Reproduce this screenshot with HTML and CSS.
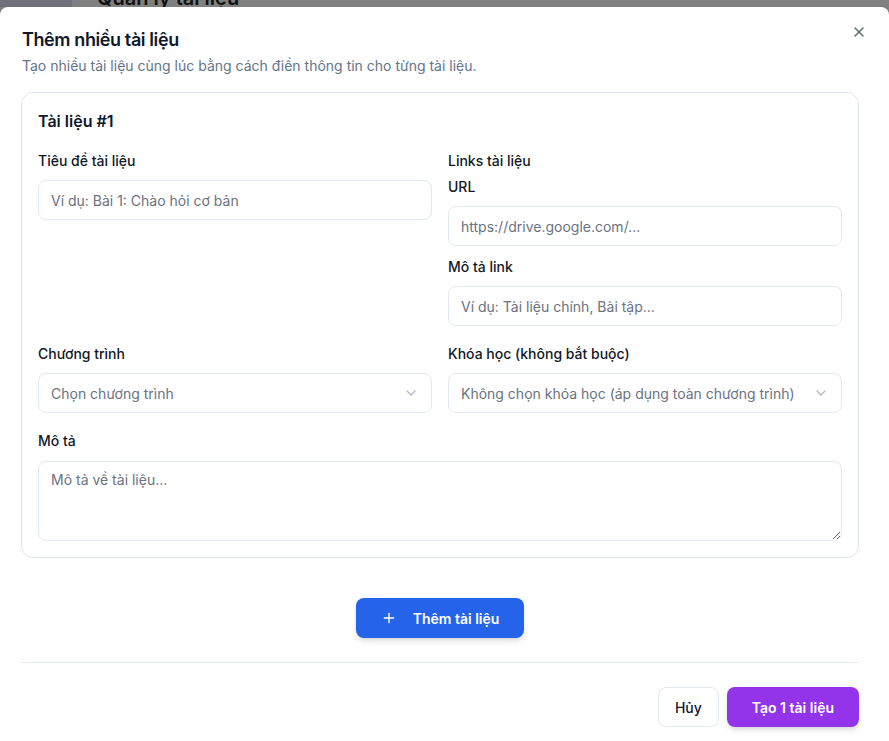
FILE: index.html
```html
<!DOCTYPE html>
<html lang="vi">
<head>
<meta charset="utf-8">
<title>Thêm nhiều tài liệu</title>
<link rel="stylesheet" href="styles.css">
</head>
<body>
<div class="backdrop">
  <div class="backdrop-side"></div>
  <div class="backdrop-title">Quản lý tài liệu</div>
</div>
<div class="modal">
  <button class="close" aria-label="Đóng">
    <svg width="16" height="16" viewBox="0 0 24 24" fill="none" stroke="currentColor" stroke-width="2" stroke-linecap="round" stroke-linejoin="round"><path d="M18 6 6 18"/><path d="m6 6 12 12"/></svg>
  </button>
  <h2 class="title">Thêm nhiều tài liệu</h2>
  <p class="subtitle">Tạo nhiều tài liệu cùng lúc bằng cách điền thông tin cho từng tài liệu.</p>

  <div class="card">
    <h3 class="card-title">Tài liệu #1</h3>
    <div class="grid">
      <div class="field">
        <label class="label">Tiêu đề tài liệu</label>
        <input class="input" placeholder="Ví dụ: Bài 1: Chào hỏi cơ bản">
      </div>
      <div class="field">
        <div class="label label-group">Links tài liệu</div>
        <div class="link-item">
          <label class="label">URL</label>
          <input class="input" placeholder="https://drive.google.com/...">
        </div>
        <div class="link-item link-item-next">
          <label class="label">Mô tả link</label>
          <input class="input" placeholder="Ví dụ: Tài liệu chính, Bài tập...">
        </div>
      </div>
      <div class="field">
        <label class="label">Chương trình</label>
        <div class="select">
          <span>Chọn chương trình</span>
          <svg class="chev" width="16" height="16" viewBox="0 0 24 24" fill="none" stroke="currentColor" stroke-width="2" stroke-linecap="round" stroke-linejoin="round"><path d="m6 9 6 6 6-6"/></svg>
        </div>
      </div>
      <div class="field">
        <label class="label">Khóa học (không bắt buộc)</label>
        <div class="select">
          <span>Không chọn khóa học (áp dụng toàn chương trình)</span>
          <svg class="chev" width="16" height="16" viewBox="0 0 24 24" fill="none" stroke="currentColor" stroke-width="2" stroke-linecap="round" stroke-linejoin="round"><path d="m6 9 6 6 6-6"/></svg>
        </div>
      </div>
      <div class="field wide">
        <label class="label label-area">Mô tả</label>
        <textarea class="textarea" placeholder="Mô tả về tài liệu..."></textarea>
      </div>
    </div>
  </div>

  <div class="add-row">
    <button class="btn-add">
      <svg width="16" height="16" viewBox="0 0 24 24" fill="none" stroke="currentColor" stroke-width="2" stroke-linecap="round" stroke-linejoin="round"><path d="M5 12h14"/><path d="M12 5v14"/></svg>
      <span>Thêm tài liệu</span>
    </button>
  </div>

  <hr class="divider">

  <div class="footer">
    <button class="btn-cancel">Hủy</button>
    <button class="btn-primary">Tạo 1 tài liệu</button>
  </div>
</div>
</body>
</html>
```

FILE: styles.css
```css
html, body {
  margin: 0;
  height: 741px;
  overflow: hidden;
}

body {
  background: #808080;
  font-family: Inter, "Noto Sans", "Liberation Sans", sans-serif;
  color: #0f172a;
}

.backdrop {
  display: flex;
  height: 7px;
  overflow: hidden;
}

.backdrop-side {
  width: 72px;
  flex: none;
  background: #6f707b;
}

.backdrop-title {
  padding-left: 25px;
  margin-top: -14px;
  font-size: 20px;
  line-height: 24px;
  font-weight: 600;
  color: #111;
  white-space: nowrap;
}

.modal {
  position: relative;
  box-sizing: border-box;
  height: 734px;
  background: #fff;
  border-radius: 8px 8px 0 0;
  padding: 24px 30px 0 21px;
}

.close {
  position: absolute;
  top: 17px;
  right: 22px;
  width: 16px;
  height: 16px;
  padding: 0;
  border: 0;
  background: none;
  color: #5b6472;
  display: flex;
}

.title {
  margin: 0;
  padding-left: 1px;
  font-size: 18px;
  line-height: 18px;
  font-weight: 600;
  letter-spacing: -0.4px;
  color: #0f172a;
}

.subtitle {
  margin: 7px 0 0;
  padding-left: 1px;
  font-size: 14px;
  line-height: 20px;
  color: #64748b;
}

.card {
  margin-top: 16px;
  border: 1px solid #dde4ee;
  border-radius: 12px;
  padding: 16px;
}

.card-title {
  margin: 0 0 18px;
  font-size: 16px;
  line-height: 24px;
  font-weight: 600;
  color: #0f172a;
}

.grid {
  display: grid;
  grid-template-columns: 1fr 1fr;
  column-gap: 16px;
  row-gap: 18px;
}

.wide {
  grid-column: 1 / -1;
}

.label {
  display: block;
  font-size: 14px;
  line-height: 20px;
  font-weight: 500;
  color: #111827;
  margin-bottom: 9px;
}

.label-group {
  margin-bottom: 6px;
}

.label-area {
  margin-bottom: 10px;
}

.link-item-next {
  margin-top: 11px;
}

.input,
.select,
.textarea {
  box-sizing: border-box;
  width: 100%;
  border: 1px solid #e2e8f0;
  border-radius: 8px;
  background: #fff;
  font-family: Inter, "Noto Sans", "Liberation Sans", sans-serif;
  font-size: 14px;
  color: #0f172a;
}

.input {
  display: block;
  height: 40px;
  padding: 0 12px;
  outline: none;
}

.input::placeholder,
.textarea::placeholder {
  color: #6b7280;
}

.select {
  height: 40px;
  padding: 0 12px;
  display: flex;
  align-items: center;
  justify-content: space-between;
  color: #6b7280;
}

.chev {
  flex: none;
  color: #64748b;
  opacity: 0.5;
}

.textarea {
  display: block;
  height: 80px;
  padding: 8px 12px;
  line-height: 20px;
  resize: vertical;
  outline: none;
}

.add-row {
  display: flex;
  justify-content: center;
  padding: 40px 0 24px;
}

.btn-add {
  display: inline-flex;
  align-items: center;
  gap: 16px;
  height: 40px;
  padding: 0 25px;
  border: 0;
  border-radius: 8px;
  background: #2563eb;
  color: #fff;
  font-family: Inter, "Noto Sans", "Liberation Sans", sans-serif;
  font-size: 14px;
  font-weight: 600;
  box-shadow: 0 4px 6px -1px rgba(0, 0, 0, 0.12), 0 2px 4px -2px rgba(0, 0, 0, 0.1);
}

.btn-add svg {
  flex: none;
}

.divider {
  margin: 0;
  border: 0;
  height: 1px;
  background: #e2e8f0;
}

.footer {
  display: flex;
  justify-content: flex-end;
  gap: 8px;
  padding-top: 24px;
}

.btn-cancel,
.btn-primary {
  height: 40px;
  border-radius: 8px;
  font-family: Inter, "Noto Sans", "Liberation Sans", sans-serif;
  font-size: 14px;
}

.btn-cancel {
  padding: 0 16px;
  border: 1px solid #e2e8f0;
  background: #fff;
  color: #0f172a;
  font-weight: 500;
}

.btn-primary {
  padding: 0 25px;
  border: 0;
  background: #9333ea;
  color: #fff;
  font-weight: 600;
  box-shadow: 0 4px 6px -1px rgba(0, 0, 0, 0.12), 0 2px 4px -2px rgba(0, 0, 0, 0.1);
}
```
